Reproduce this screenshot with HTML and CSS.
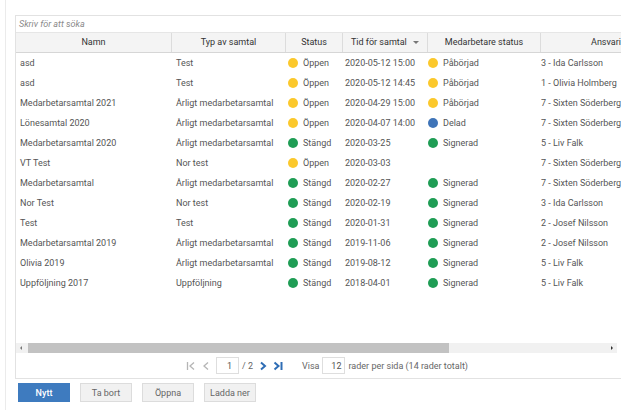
FILE: index.html
```html
<!DOCTYPE html>
<html lang="sv">
<head>
<meta charset="utf-8">
<link rel="stylesheet" href="styles.css">
</head>
<body>
<div class="page">
  <div class="grid">
    <div class="search">Skriv för att söka</div>
    <div class="table">
      <div class="row head">
        <div class="hc">Namn</div>
        <div class="hc">Typ av samtal</div>
        <div class="hc">Status</div>
        <div class="hc">Tid för samtal <span class="sort"></span></div>
        <div class="hc">Medarbetare status</div>
        <div class="hc">Ansvarig</div>
      </div>
      <div class="row"><div class="c c1">asd</div><div class="c c2">Test</div><div class="c c3"><i class="dot y"></i>Öppen</div><div class="c c4">2020-05-12 15:00</div><div class="c c5"><i class="dot y"></i>Påbörjad</div><div class="c c6">3 - Ida Carlsson</div></div>
      <div class="row"><div class="c c1">asd</div><div class="c c2">Test</div><div class="c c3"><i class="dot y"></i>Öppen</div><div class="c c4">2020-05-12 14:45</div><div class="c c5"><i class="dot y"></i>Påbörjad</div><div class="c c6">1 - Olivia Holmberg</div></div>
      <div class="row"><div class="c c1">Medarbetarsamtal 2021</div><div class="c c2">Årligt medarbetarsamtal</div><div class="c c3"><i class="dot y"></i>Öppen</div><div class="c c4">2020-04-29 15:00</div><div class="c c5"><i class="dot y"></i>Påbörjad</div><div class="c c6">7 - Sixten Söderberg</div></div>
      <div class="row"><div class="c c1">Lönesamtal 2020</div><div class="c c2">Årligt medarbetarsamtal</div><div class="c c3"><i class="dot y"></i>Öppen</div><div class="c c4">2020-04-07 14:00</div><div class="c c5"><i class="dot b"></i>Delad</div><div class="c c6">7 - Sixten Söderberg</div></div>
      <div class="row"><div class="c c1">Medarbetarsamtal 2020</div><div class="c c2">Årligt medarbetarsamtal</div><div class="c c3"><i class="dot g"></i>Stängd</div><div class="c c4">2020-03-25</div><div class="c c5"><i class="dot g"></i>Signerad</div><div class="c c6">5 - Liv Falk</div></div>
      <div class="row"><div class="c c1">VT Test</div><div class="c c2">Nor test</div><div class="c c3"><i class="dot y"></i>Öppen</div><div class="c c4">2020-03-03</div><div class="c c5"></div><div class="c c6">7 - Sixten Söderberg</div></div>
      <div class="row"><div class="c c1">Medarbetarsamtal</div><div class="c c2">Årligt medarbetarsamtal</div><div class="c c3"><i class="dot g"></i>Stängd</div><div class="c c4">2020-02-27</div><div class="c c5"><i class="dot g"></i>Signerad</div><div class="c c6">7 - Sixten Söderberg</div></div>
      <div class="row"><div class="c c1">Nor Test</div><div class="c c2">Nor test</div><div class="c c3"><i class="dot g"></i>Stängd</div><div class="c c4">2020-02-19</div><div class="c c5"><i class="dot g"></i>Signerad</div><div class="c c6">3 - Ida Carlsson</div></div>
      <div class="row"><div class="c c1">Test</div><div class="c c2">Test</div><div class="c c3"><i class="dot g"></i>Stängd</div><div class="c c4">2020-01-31</div><div class="c c5"><i class="dot g"></i>Signerad</div><div class="c c6">2 - Josef Nilsson</div></div>
      <div class="row"><div class="c c1">Medarbetarsamtal 2019</div><div class="c c2">Årligt medarbetarsamtal</div><div class="c c3"><i class="dot g"></i>Stängd</div><div class="c c4">2019-11-06</div><div class="c c5"><i class="dot g"></i>Signerad</div><div class="c c6">2 - Josef Nilsson</div></div>
      <div class="row"><div class="c c1">Olivia 2019</div><div class="c c2">Årligt medarbetarsamtal</div><div class="c c3"><i class="dot g"></i>Stängd</div><div class="c c4">2019-08-12</div><div class="c c5"><i class="dot g"></i>Signerad</div><div class="c c6">5 - Liv Falk</div></div>
      <div class="row"><div class="c c1">Uppföljning 2017</div><div class="c c2">Uppföljning</div><div class="c c3"><i class="dot g"></i>Stängd</div><div class="c c4">2018-04-01</div><div class="c c5"><i class="dot g"></i>Signerad</div><div class="c c6">5 - Liv Falk</div></div>
    </div>
    <div class="spacer"></div>
    <div class="hscroll">
      <span class="arr left"></span>
      <div class="track"><div class="thumb"></div></div>
      <span class="arr right"></span>
    </div>
    <div class="pager">
      <svg class="pi" width="10" height="10" viewBox="0 0 10 10"><path d="M1.5 1v8M8 1.5L4 5l4 3.5" fill="none" stroke="#b5b5b5" stroke-width="1.3"/></svg>
      <svg class="pi" width="8" height="10" viewBox="0 0 8 10"><path d="M6 1.5L2 5l4 3.5" fill="none" stroke="#b5b5b5" stroke-width="1.3"/></svg>
      <span class="pbox">1</span>
      <span class="ptext slash">/ 2</span>
      <svg class="pi" width="8" height="10" viewBox="0 0 8 10"><path d="M2 1.5L6 5 2 8.5" fill="none" stroke="#2f6db5" stroke-width="2"/></svg>
      <svg class="pi last" width="11" height="10" viewBox="0 0 11 10"><path d="M1.5 1.5L5.5 5 1.5 8.5" fill="none" stroke="#2f6db5" stroke-width="2"/><path d="M8.5 1v8" fill="none" stroke="#2f6db5" stroke-width="2"/></svg>
      <span class="visa">Visa</span>
      <span class="pbox nbox">12</span>
      <span class="ptext">rader per sida (14 rader totalt)</span>
    </div>
  </div>
  <div class="buttons">
    <button class="btn primary">Nytt</button>
    <button class="btn">Ta bort</button>
    <button class="btn">Öppna</button>
    <button class="btn">Ladda ner</button>
  </div>
</div>
</body>
</html>
```
FILE: styles.css
```css
html, body {
  margin: 0;
  padding: 0;
  background: #fff;
}
body {
  font-family: Roboto, "Liberation Sans", sans-serif;
  font-size: 9px;
  color: #555;
  width: 621px;
  height: 410px;
  overflow: hidden;
}
.page {
  margin-left: 5px;
  border-left: 1px solid #ebebeb;
  height: 410px;
  padding: 15px 0 0 9px;
  box-sizing: border-box;
}
.grid {
  border: 1px solid #e2e2e2;
  border-right: none;
  width: 606px;
  overflow: hidden;
  display: flex;
  flex-direction: column;
  height: 364px;
  box-sizing: border-box;
}
.search {
  height: 16px;
  line-height: 16px;
  padding-left: 3px;
  font-style: italic;
  color: #8a8a8a;
  border-bottom: 1px solid #e6e6e6;
}
.row {
  display: grid;
  grid-template-columns: 156px 114px 57px 85px 113px 136px;
  height: 20px;
  align-items: center;
  white-space: nowrap;
}
.head {
  background: #f4f4f4;
  border-bottom: 1px solid #d6d6d6;
  height: 19px;
  color: #333;
}
.hc {
  text-align: center;
  border-right: 1px solid #dcdcdc;
  height: 19px;
  line-height: 19px;
}
.sort {
  display: inline-block;
  width: 0;
  height: 0;
  border-left: 3px solid transparent;
  border-right: 3px solid transparent;
  border-top: 3px solid #777;
  margin-left: 4px;
  vertical-align: 1px;
}
.c {
  display: flex;
  align-items: center;
  overflow: hidden;
}
.c1 { padding-left: 4px; }
.c2 { padding-left: 4px; }
.c3 { padding-left: 2px; }
.c4 { padding-left: 2px; }
.c5 { padding-left: 0; }
.c6 { padding-left: 0; }
.dot {
  display: inline-block;
  width: 10px;
  height: 10px;
  border-radius: 50%;
  margin-right: 5px;
  flex: none;
}
.dot.y { background: #fbc82c; }
.dot.g { background: #1f9d55; }
.dot.b { background: #3f74b8; }
.spacer {
  flex: 1;
}
.hscroll {
  height: 10px;
  display: flex;
  align-items: center;
  background: #f1f1f1;
  margin-right: 4px;
}
.arr {
  width: 12px;
  height: 10px;
  position: relative;
  flex: none;
}
.arr.left::after, .arr.right::after {
  content: "";
  position: absolute;
  top: 3px;
  border-top: 2px solid transparent;
  border-bottom: 2px solid transparent;
}
.arr.left::after {
  left: 4px;
  border-right: 2px solid #777;
}
.arr.right::after {
  right: 4px;
  border-left: 2px solid #333;
}
.track {
  flex: 1;
  height: 10px;
}
.thumb {
  width: 421px;
  height: 10px;
  background: #c2c2c2;
}
.pager {
  height: 25px;
  display: flex;
  align-items: center;
  padding-left: 170px;
  color: #666;
  margin-right: 3px;
}
.pi {
  margin-right: 6px;
}
.pi.last {
  margin-right: 0;
}
.pbox {
  display: inline-block;
  width: 23px;
  height: 17px;
  line-height: 17px;
  border: 1px solid #dedede;
  text-align: right;
  padding-right: 6px;
  box-sizing: border-box;
  color: #555;
  margin-right: 3px;
}
.ptext {
  margin-right: 10px;
}
.ptext.slash {
  margin-right: 6px;
}
.visa {
  margin-left: 18px;
  margin-right: 3px;
}
.nbox {
  width: 23px;
  padding-right: 3px;
}
.buttons {
  display: flex;
  gap: 10px;
  padding: 4px 0 0 3px;
}
.btn {
  width: 52px;
  height: 19px;
  border: 1px solid #dcdcdc;
  background: #f1f1f1;
  color: #666;
  font-family: Roboto, "Liberation Sans", sans-serif;
  font-size: 9px;
  padding: 0;
}
.btn.primary {
  background: #3e7bbf;
  border-color: #3e7bbf;
  color: #fff;
  font-weight: 500;
}
```
